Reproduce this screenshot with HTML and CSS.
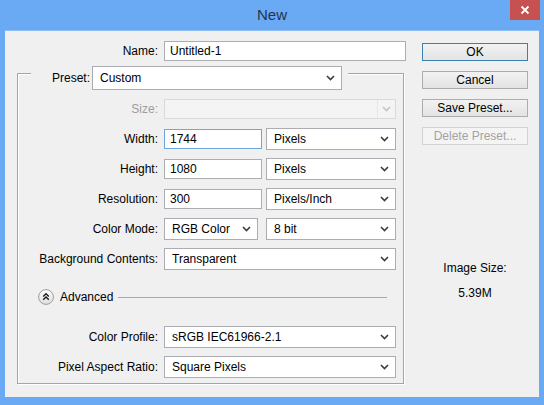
FILE: index.html
```html
<!DOCTYPE html>
<html>
<head>
<meta charset="utf-8">
<link rel="stylesheet" href="styles.css">
</head>
<body>
<div class="window">
  <header class="titlebar">
    <span class="tb-side"></span>
    <span class="title">New</span>
    <span class="tb-side tb-right"><span class="close"><svg width="10" height="10" viewBox="0 0 10 10"><path d="M1.5 1.5 L8.5 8.5 M8.5 1.5 L1.5 8.5" stroke="#fff" stroke-width="1.8" fill="none"/></svg></span></span>
  </header>
  <main class="client">
    <section class="form">
      <div class="name-row">
        <span class="lbl name-lbl">Name:</span>
        <div class="field input name">Untitled-1</div>
      </div>
      <div class="group">
        <div class="group-head">
          <span class="lbl">Preset:</span>
          <div class="field select preset"><span>Custom</span><svg class="chev" width="9" height="6" viewBox="0 0 9 6"><path d="M1 1 L4.5 4.5 L8 1" fill="none" stroke="#3c3c3c" stroke-width="1.6"/></svg></div>
        </div>
        <div class="rows">
          <span class="lbl disabled">Size:</span>
          <div class="ctl"><div class="field select disabled-field full"><span></span><span class="dis-btn"><svg class="chev" width="9" height="6" viewBox="0 0 9 6"><path d="M1 1 L4.5 4.5 L8 1" fill="none" stroke="#c4c4c4" stroke-width="1.6"/></svg></span></div></div>

          <span class="lbl">Width:</span>
          <div class="ctl"><div class="field input num focus">1744</div><div class="field select unit"><span>Pixels</span><svg class="chev" width="9" height="6" viewBox="0 0 9 6"><path d="M1 1 L4.5 4.5 L8 1" fill="none" stroke="#3c3c3c" stroke-width="1.6"/></svg></div></div>

          <span class="lbl">Height:</span>
          <div class="ctl"><div class="field input num">1080</div><div class="field select unit"><span>Pixels</span><svg class="chev" width="9" height="6" viewBox="0 0 9 6"><path d="M1 1 L4.5 4.5 L8 1" fill="none" stroke="#3c3c3c" stroke-width="1.6"/></svg></div></div>

          <span class="lbl">Resolution:</span>
          <div class="ctl"><div class="field input num">300</div><div class="field select unit"><span>Pixels/Inch</span><svg class="chev" width="9" height="6" viewBox="0 0 9 6"><path d="M1 1 L4.5 4.5 L8 1" fill="none" stroke="#3c3c3c" stroke-width="1.6"/></svg></div></div>

          <span class="lbl">Color Mode:</span>
          <div class="ctl"><div class="field select mode"><span>RGB Color</span><svg class="chev" width="9" height="6" viewBox="0 0 9 6"><path d="M1 1 L4.5 4.5 L8 1" fill="none" stroke="#3c3c3c" stroke-width="1.6"/></svg></div><div class="field select unit"><span>8 bit</span><svg class="chev" width="9" height="6" viewBox="0 0 9 6"><path d="M1 1 L4.5 4.5 L8 1" fill="none" stroke="#3c3c3c" stroke-width="1.6"/></svg></div></div>

          <span class="lbl">Background Contents:</span>
          <div class="ctl"><div class="field select full"><span>Transparent</span><svg class="chev" width="9" height="6" viewBox="0 0 9 6"><path d="M1 1 L4.5 4.5 L8 1" fill="none" stroke="#3c3c3c" stroke-width="1.6"/></svg></div></div>
        </div>

        <div class="adv">
          <svg class="adv-icon" width="16" height="16" viewBox="0 0 16 16"><defs><linearGradient id="ag" x1="0" y1="0" x2="0" y2="1"><stop offset="0" stop-color="#ffffff"/><stop offset="1" stop-color="#dedede"/></linearGradient></defs><circle cx="8" cy="8" r="7.4" fill="url(#ag)" stroke="#9c9c9c" stroke-width="1"/><path d="M5.2 7.6 L8 4.8 L10.8 7.6 M5.2 10.8 L8 8 L10.8 10.8" fill="none" stroke="#1e1e1e" stroke-width="1.4"/></svg>
          <span class="adv-text">Advanced</span>
          <span class="adv-line"></span>
        </div>

        <div class="rows rows2">
          <span class="lbl">Color Profile:</span>
          <div class="ctl"><div class="field select full"><span>sRGB IEC61966-2.1</span><svg class="chev" width="9" height="6" viewBox="0 0 9 6"><path d="M1 1 L4.5 4.5 L8 1" fill="none" stroke="#3c3c3c" stroke-width="1.6"/></svg></div></div>

          <span class="lbl">Pixel Aspect Ratio:</span>
          <div class="ctl"><div class="field select full"><span>Square Pixels</span><svg class="chev" width="9" height="6" viewBox="0 0 9 6"><path d="M1 1 L4.5 4.5 L8 1" fill="none" stroke="#3c3c3c" stroke-width="1.6"/></svg></div></div>
        </div>
      </div>
    </section>
    <aside class="side">
      <div class="btn default">OK</div>
      <div class="btn">Cancel</div>
      <div class="btn">Save Preset...</div>
      <div class="btn disabled-btn">Delete Preset...</div>
      <div class="img-size-lbl">Image Size:</div>
      <div class="img-size-val">5.39M</div>
    </aside>
  </main>
</div>
</body>
</html>
```

FILE: styles.css
```css
* { box-sizing: border-box; }
html, body { margin: 0; padding: 0; }
body {
  width: 544px;
  height: 405px;
  overflow: hidden;
  background: #6aaaf4;
  font-family: "Liberation Sans", Arial, sans-serif;
  font-size: 12px;
  color: #000;
}
.window {
  width: 544px;
  height: 405px;
  background: #6aaaf4;
}
.titlebar {
  height: 30px;
  display: grid;
  grid-template-columns: 1fr auto 1fr;
  align-items: start;
}
.title {
  font-size: 15px;
  color: #1f3550;
  line-height: 30px;
}
.tb-right {
  display: flex;
  justify-content: flex-end;
  padding-right: 4px;
}
.close {
  width: 30px;
  height: 20px;
  background: #c75050;
  display: flex;
  align-items: center;
  justify-content: center;
}
.client {
  margin: 0 5px;
  height: 367px;
  background: #f0f0f0;
  display: flex;
  border-top: 1px solid #8dbdf3;
}
.form {
  width: 405px;
  padding-top: 10px;
}
.name-row {
  display: flex;
  align-items: center;
  height: 20px;
}
.name-lbl {
  width: 153px;
  text-align: right;
  margin-right: 6px;
}
.lbl { white-space: nowrap; }
.field {
  background: #fff;
  border: 1px solid #abadb3;
  display: flex;
  align-items: center;
  white-space: nowrap;
}
.input {
  height: 20px;
  padding-left: 5px;
}
.input.name { width: 242px; }
.input.num { width: 98px; }
.input.focus { border-color: #6fa7dc; }
.select {
  height: 22px;
  padding: 0 6px 0 7px;
  justify-content: space-between;
}
.chev { display: block; }
.group {
  margin-top: 12px;
  margin-left: 12px;
  width: 387px;
  height: 311px;
  border: 1px solid #a5a5a5;
  box-shadow: inset 1px 1px 0 #fff, 1px 1px 0 #fff;
}
.group-head {
  margin-top: -8px;
  margin-left: 13px;
  padding: 0 6px 0 21px;
  background: #f0f0f0;
  display: flex;
  align-items: center;
  width: 317px;
}
.group-head .lbl { width: 35px; margin-right: 5px; }
.preset { width: 250px; height: 24px; }
.rows {
  margin-top: 8px;
  display: grid;
  grid-template-columns: 140px 232px;
  column-gap: 6px;
  row-gap: 8px;
  grid-auto-rows: 22px;
  align-items: center;
}
.rows .lbl { text-align: right; }
.ctl {
  display: flex;
  align-items: center;
  justify-content: space-between;
}
.full { width: 232px; }
.unit { width: 130px; }
.mode { width: 94px; }
.disabled { color: #9d9d9d; }
.disabled-field {
  background: #f4f4f4;
  border-color: #d9d9d9;
  height: 20px;
  padding-right: 0;
}
.dis-btn {
  height: 18px;
  width: 18px;
  border-left: 1px solid #e6e6e6;
  display: flex;
  align-items: center;
  justify-content: center;
}
.adv {
  margin-top: 19px;
  height: 16px;
  display: flex;
  align-items: center;
  padding-left: 20px;
}
.adv-icon { display: block; }
.adv-text { margin-left: 6px; }
.adv-line {
  flex: 1;
  height: 1px;
  background: #a8a8a8;
  margin-left: 5px;
  margin-right: 16px;
}
.rows2 { margin-top: 21px; }
.side {
  margin-left: 12px;
  width: 106px;
  padding-top: 12px;
  display: flex;
  flex-direction: column;
  align-items: center;
}
.btn {
  width: 106px;
  height: 18px;
  margin-bottom: 10px;
  border: 1px solid #acacac;
  background: linear-gradient(#f2f2f2, #e3e3e3);
  display: flex;
  align-items: center;
  justify-content: center;
}
.btn.default { border-color: #3c7fb1; }
.disabled-btn {
  color: #a3a3a3;
  border-color: #d3d3d3;
  background: #f4f4f4;
}
.img-size-lbl {
  margin-top: 106px;
  line-height: 14px;
}
.img-size-val {
  margin-top: 11px;
  line-height: 14px;
}
```
